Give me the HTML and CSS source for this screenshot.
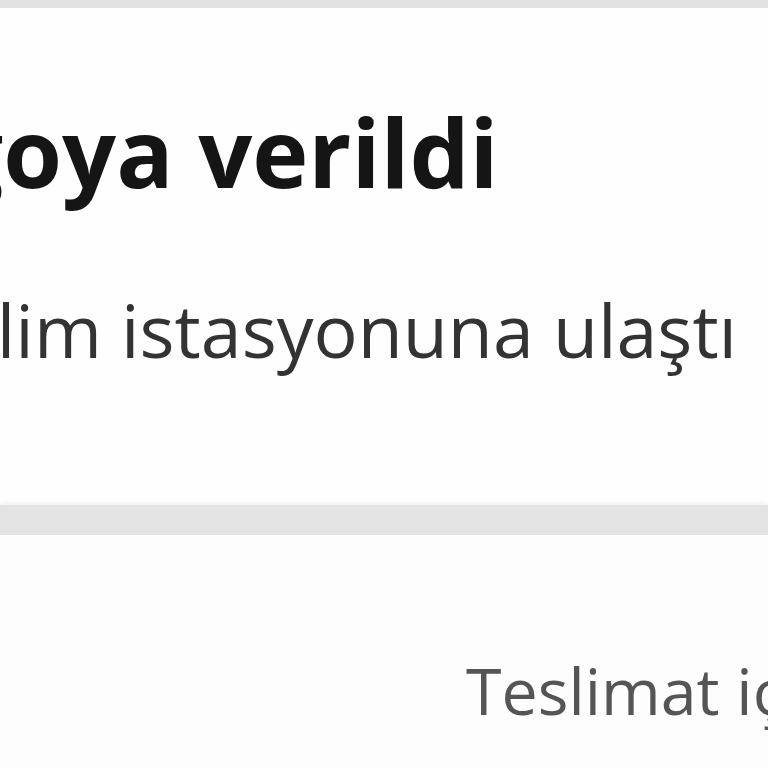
FILE: index.html
```html
<!DOCTYPE html>
<html lang="tr">
<head>
<meta charset="utf-8">
<title>Sipariş durumu</title>
<link rel="stylesheet" href="styles.css">
</head>
<body>
<div class="page">
  <div class="top-band"></div>
  <section class="card">
    <h1 class="status">Kargoya verildi</h1>
    <p class="detail">Teslim istasyonuna ulaştı</p>
  </section>
  <div class="sep-band"></div>
  <section class="footer">
    <p class="note">Teslimat için</p>
  </section>
</div>
</body>
</html>
```
FILE: styles.css
```css
html, body {
  margin: 0;
  padding: 0;
  background: #ffffff;
  overflow: hidden;
}
.page {
  width: 768px;
  height: 768px;
  overflow: hidden;
  font-family: "Open Sans", "Noto Sans", sans-serif;
  display: flex;
  flex-direction: column;
}
.top-band {
  height: 8px;
  background: #e2e2e2;
  box-shadow: 0 2px 4px #e8e8e8;
  flex: none;
}
.card {
  height: 497px;
  flex: none;
  padding-top: 86px;
  box-sizing: border-box;
  background: #fefefe;
  overflow: hidden;
  white-space: nowrap;
}
.status {
  margin: 0 0 0 -214px;
  font-size: 95px;
  line-height: 114px;
  font-weight: 700;
  color: #151515;
}
.detail {
  margin: 78px 0 0 -120px;
  font-size: 73.5px;
  line-height: 87px;
  font-weight: 400;
  color: #333333;
}
.sep-band {
  height: 30px;
  flex: none;
  background: #e4e4e4;
  box-shadow: 0 0 6px #e6e6e6;
}
.footer {
  flex: 1;
  padding-top: 117px;
  padding-left: 466px;
  background: #fdfdfd;
  overflow: hidden;
  white-space: nowrap;
}
.note {
  margin: 0;
  font-size: 64.5px;
  line-height: 77px;
  color: #555555;
}
```
